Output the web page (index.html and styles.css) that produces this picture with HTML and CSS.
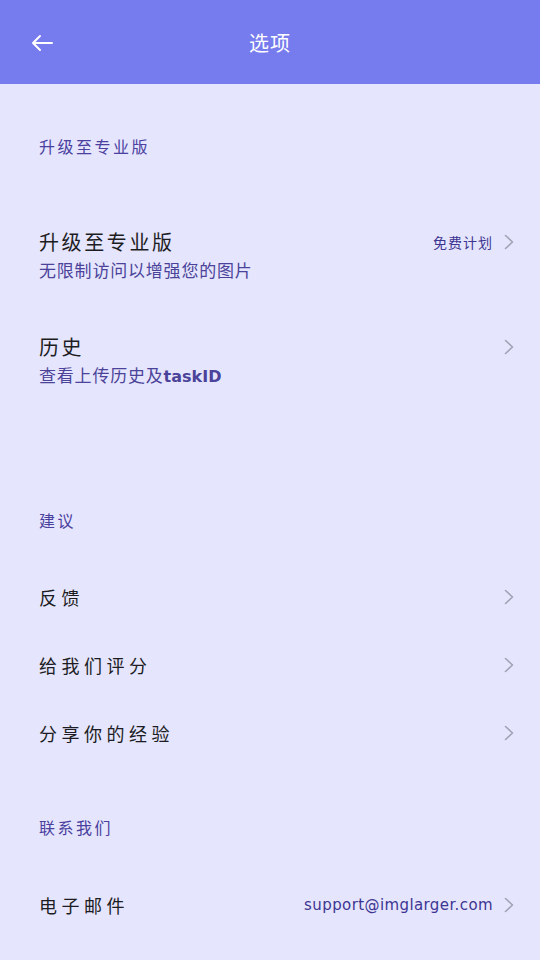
FILE: index.html
```html
<!DOCTYPE html>
<html lang="zh-CN">
<head>
  <meta charset="UTF-8">
  <meta name="viewport" content="width=device-width, initial-scale=1.0">
  <title>选项</title>
  <link rel="stylesheet" href="styles.css">
</head>
<body>
  <header class="topbar">
    <a class="back" href="#">
      <svg width="22" height="18" viewBox="0 0 22 18"><path d="M21 9H2M9 2L2 9L9 16" fill="none" stroke="#fff" stroke-width="2" stroke-linecap="round" stroke-linejoin="round"/></svg>
    </a>
    <h1>选项</h1>
  </header>

  <main>
    <div class="section-title first">升级至专业版</div>

    <a class="item item-tall" href="#">
      <div class="item-text">
        <div class="item-title big">升级至专业版</div>
        <div class="item-sub">无限制访问以增强您的图片</div>
      </div>
      <span class="item-value cjk">免费计划</span>
      <svg class="chevron" width="10" height="16" viewBox="0 0 10 16"><path d="M1.5 1.5L8.5 8L1.5 14.5" fill="none" stroke="#a2a2b6" stroke-width="1.6" stroke-linecap="round" stroke-linejoin="round"/></svg>
    </a>

    <a class="item item-tall" href="#">
      <div class="item-text">
        <div class="item-title big">历史</div>
        <div class="item-sub">查看上传历史及<span class="latin">taskID</span></div>
      </div>
      <svg class="chevron" width="10" height="16" viewBox="0 0 10 16"><path d="M1.5 1.5L8.5 8L1.5 14.5" fill="none" stroke="#a2a2b6" stroke-width="1.6" stroke-linecap="round" stroke-linejoin="round"/></svg>
    </a>

    <div class="section-title second">建议</div>

    <a class="item" href="#">
      <div class="item-title">反馈</div>
      <svg class="chevron" width="10" height="16" viewBox="0 0 10 16"><path d="M1.5 1.5L8.5 8L1.5 14.5" fill="none" stroke="#a2a2b6" stroke-width="1.6" stroke-linecap="round" stroke-linejoin="round"/></svg>
    </a>
    <a class="item" href="#">
      <div class="item-title">给我们评分</div>
      <svg class="chevron" width="10" height="16" viewBox="0 0 10 16"><path d="M1.5 1.5L8.5 8L1.5 14.5" fill="none" stroke="#a2a2b6" stroke-width="1.6" stroke-linecap="round" stroke-linejoin="round"/></svg>
    </a>
    <a class="item" href="#">
      <div class="item-title">分享你的经验</div>
      <svg class="chevron" width="10" height="16" viewBox="0 0 10 16"><path d="M1.5 1.5L8.5 8L1.5 14.5" fill="none" stroke="#a2a2b6" stroke-width="1.6" stroke-linecap="round" stroke-linejoin="round"/></svg>
    </a>

    <div class="section-title third">联系我们</div>

    <a class="item item-mail" href="#">
      <div class="item-title">电子邮件</div>
      <span class="item-value latin">support@imglarger.com</span>
      <svg class="chevron" width="10" height="16" viewBox="0 0 10 16"><path d="M1.5 1.5L8.5 8L1.5 14.5" fill="none" stroke="#a2a2b6" stroke-width="1.6" stroke-linecap="round" stroke-linejoin="round"/></svg>
    </a>
  </main>
</body>
</html>
```

FILE: styles.css
```css
body {
  margin: 0;
  background-color: #e5e5fd;
  font-family: "Noto Sans CJK SC", "Noto Sans", sans-serif;
  color: #1c1c22;
  height: 960px;
  overflow: hidden;
}
a {
  text-decoration: none;
  color: inherit;
}
.topbar {
  height: 84px;
  background-color: #767bed;
  display: flex;
  align-items: center;
  justify-content: center;
  position: relative;
}
.topbar h1 {
  margin: 0;
  font-size: 20px;
  font-weight: 400;
  color: #fff;
  letter-spacing: 1px;
}
.back {
  position: absolute;
  left: 31px;
  top: 34px;
  display: flex;
}
.section-title {
  height: 48px;
  line-height: 48px;
  padding-left: 39px;
  font-size: 16px;
  letter-spacing: 2.5px;
  color: #4a409e;
}
.section-title.first {
  margin-top: 38px;
  margin-bottom: 34px;
}
.section-title.second {
  margin-top: 80px;
  margin-bottom: 19px;
}
.section-title.third {
  margin-top: 36px;
  margin-bottom: 20px;
}
.item {
  display: flex;
  align-items: center;
  height: 68px;
  padding: 0 26px 0 39px;
}
.item-tall {
  height: auto;
  padding-top: 24px;
  padding-bottom: 25px;
  align-items: flex-start;
}
.item-tall .chevron {
  margin-top: 6px;
}
.item-tall .item-value {
  margin-top: 4px;
}
.item-text {
  flex: 1;
}
.item-title {
  flex: 1;
  font-size: 18px;
  letter-spacing: 4.5px;
  line-height: 28px;
}
.item-title.big {
  font-size: 20px;
  letter-spacing: 2.6px;
}
.item-sub {
  font-size: 17px;
  letter-spacing: 0.8px;
  line-height: 28px;
  color: #4b4399;
}
.item-sub .latin {
  font-size: 16px;
  font-weight: 600;
  letter-spacing: 0;
}
.item-value {
  font-size: 14px;
  color: #3d3592;
  margin-right: 11px;
}
.item-value.cjk {
  letter-spacing: 1px;
}
.latin {
  font-family: "DejaVu Sans", sans-serif;
}
.item-mail .item-value {
  font-size: 15px;
  letter-spacing: 0.4px;
}
.chevron {
  flex-shrink: 0;
}
```
